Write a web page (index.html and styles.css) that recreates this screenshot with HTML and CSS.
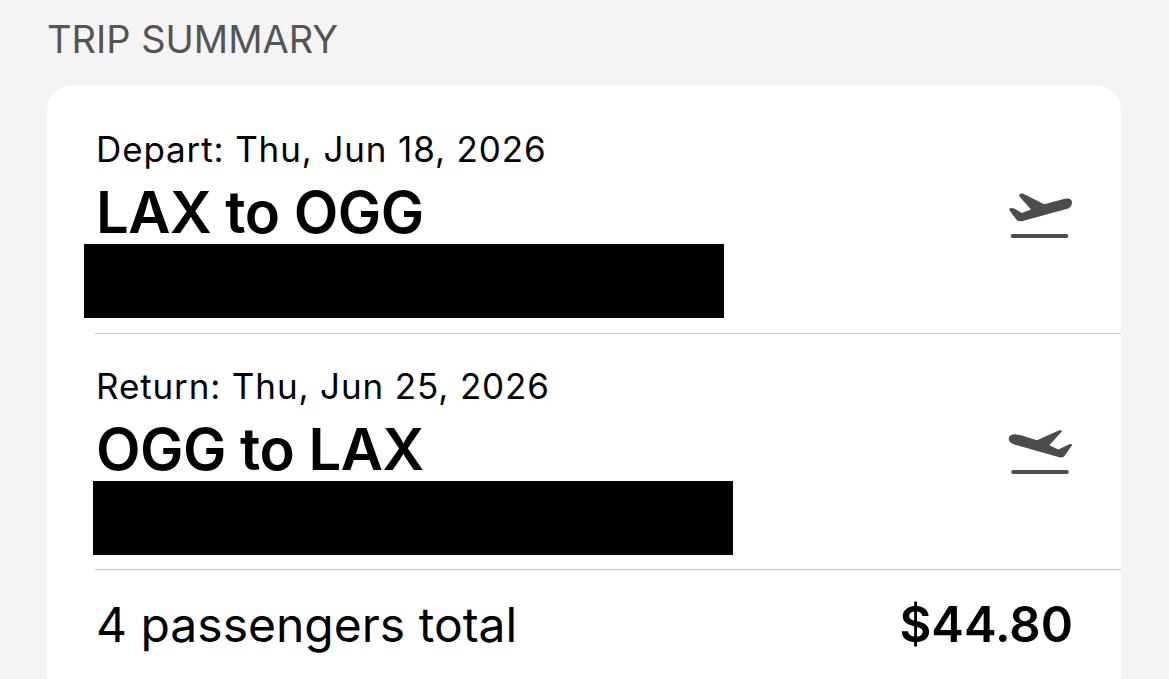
FILE: index.html
```html
<!DOCTYPE html>
<html lang="en">
<head>
	<meta charset="UTF-8">
	<title>Trip summary</title>
	<link rel="stylesheet" href="styles.css">
</head>
<body>
	<h2 class="heading">TRIP SUMMARY</h2>
	<div class="card">
		<div class="leg leg-depart">
			<div class="leg-info">
				<div class="leg-date">Depart: Thu, Jun 18, 2026</div>
				<div class="leg-route">LAX to OGG</div>
				<div class="redact redact-depart"></div>
			</div>
			<svg class="plane" width="66" height="52" viewBox="0 0 66 52">
				<path d="M13.3 2.3 Q15 1 16.7 1.6 L38.3 12.3 L56.7 7.3 Q60 6.4 62.3 6.6 Q66 7.4 66 10.6 Q65.6 15 62.3 16.6 L16.7 29 Q13 29.6 11 28.3 L3.3 18.3 Q3.4 15.6 5 16 L8.3 16.6 L15.7 21 L25 17.6 L13.3 4.3 Z" fill="#4c4c4c"/>
				<rect x="4.7" y="42" width="57.6" height="4" rx="2" fill="#4c4c4c"/>
			</svg>
		</div>
		<div class="leg leg-return">
			<div class="leg-info">
				<div class="leg-date">Return: Thu, Jun 25, 2026</div>
				<div class="leg-route">OGG to LAX</div>
				<div class="redact redact-return"></div>
			</div>
			<svg class="plane" width="66" height="52" viewBox="0 0 66 52">
				<path d="M2.7 10.6 Q3 6.8 8.3 6.3 L15 7.3 L31 12.3 L53.3 2.3 Q56 1.8 56 3.3 L43.3 17.3 L52.3 21.6 L63.3 16.3 Q66.3 15.6 66 17.3 L58.3 28.3 Q56 30 53.3 29.3 L8.3 16.6 Q3 15 2.7 10.6 Z" fill="#4c4c4c"/>
				<rect x="5.2" y="42" width="57.6" height="4" rx="2" fill="#4c4c4c"/>
			</svg>
		</div>
		<div class="total">
			<span class="total-label">4 passengers total</span>
			<span class="total-price">$44.80</span>
		</div>
	</div>
</body>
</html>
```

FILE: styles.css
```css
html,body{margin:0;padding:0;}
body{background:#f4f4f4;height:679px;overflow:hidden;font-family:"Inter","Liberation Sans",sans-serif;color:#000;padding:0 48px 0 47px;box-sizing:border-box;}

.heading{margin:0;padding:17px 0 0;height:86px;box-sizing:border-box;font-size:38px;line-height:44px;font-weight:400;color:#555;}

.card{background:#fff;border-radius:24px 24px 0 0;height:593px;}

.leg{height:248px;padding:43px 49px 0 49px;box-sizing:border-box;display:flex;justify-content:space-between;align-items:flex-start;position:relative;}
.leg::after{content:"";position:absolute;left:48px;right:0;bottom:0;height:1px;background:#c8c8c8;}
.leg-return{height:236px;padding-top:32px;}

.leg-date{font-size:35px;line-height:40px;letter-spacing:.87px;}
.leg-route{font-size:58px;line-height:64px;margin-top:11px;font-weight:600;letter-spacing:-.5px;}

.redact{background:#000;width:640px;height:74px;}
.redact-depart{margin-left:-12px;}
.redact-return{margin-left:-3px;}

.plane{margin-top:63px;}
.leg-return .plane{margin-top:62px;}

.total{display:flex;justify-content:space-between;align-items:center;padding:27px 48px 0 49px;}
.total-label{font-size:48px;line-height:56px;}
.total-price{font-size:49px;line-height:56px;font-weight:600;}
```
